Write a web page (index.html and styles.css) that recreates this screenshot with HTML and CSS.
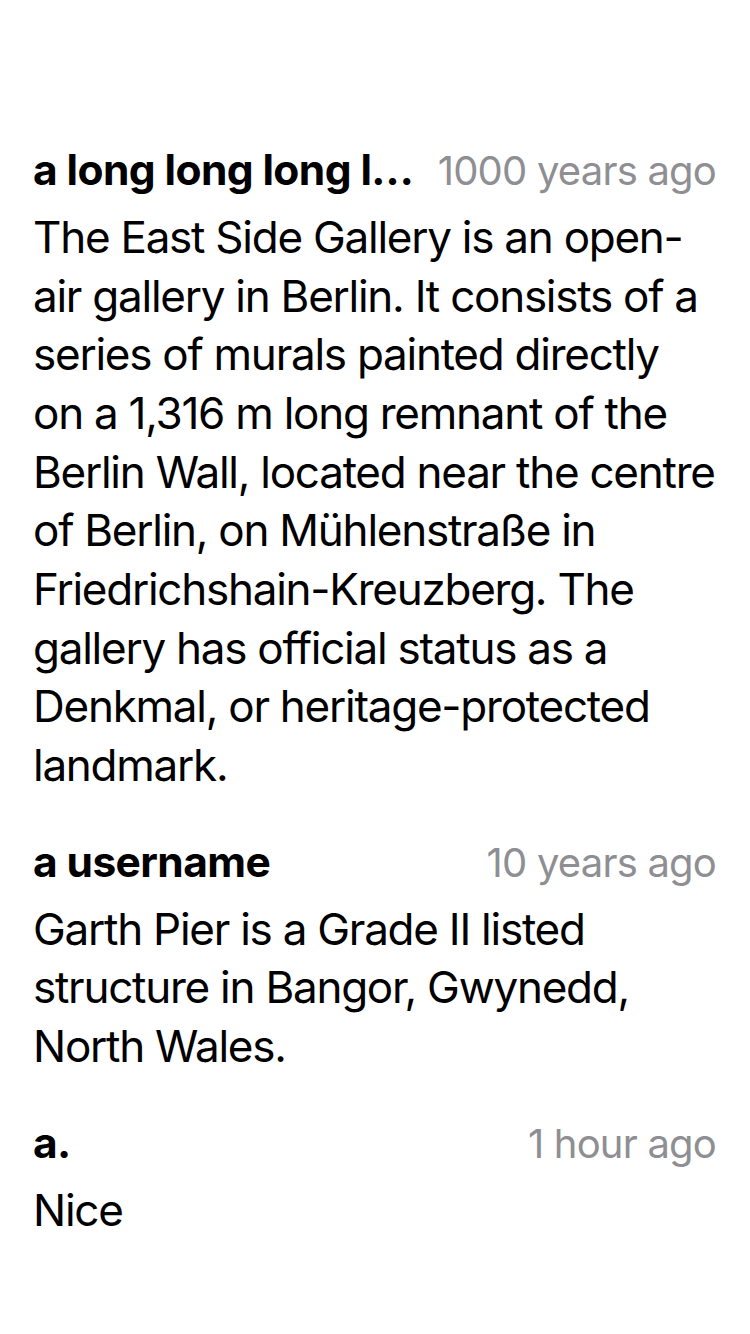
FILE: index.html
```html
<!DOCTYPE html>
<html lang="en">
<head>
<meta charset="utf-8">
<title>Comments</title>
<link rel="stylesheet" href="styles.css">
</head>
<body>
<main class="comments">
  <article class="comment">
    <header class="comment-head">
      <span class="comment-name">a long long long long long username</span>
      <span class="comment-time">1000 years ago</span>
    </header>
    <p class="comment-body">The East Side Gallery is an open-air gallery in Berlin. It consists of a series of murals painted directly on a 1,316&nbsp;m long remnant of the Berlin Wall, located near the centre of Berlin, on Mühlenstraße in Friedrichshain-Kreuzberg. The gallery has official status as a Denkmal, or heritage-protected landmark.</p>
  </article>
  <article class="comment">
    <header class="comment-head">
      <span class="comment-name">a username</span>
      <span class="comment-time">10 years ago</span>
    </header>
    <p class="comment-body">Garth Pier is a Grade II listed structure in Bangor, Gwynedd, North Wales.</p>
  </article>
  <article class="comment">
    <header class="comment-head">
      <span class="comment-name">a.</span>
      <span class="comment-time">1 hour ago</span>
    </header>
    <p class="comment-body">Nice</p>
  </article>
</main>
</body>
</html>
```

FILE: styles.css
```css
html, body {
  margin: 0;
  padding: 0;
  background: #ffffff;
}

body {
  font-family: Inter, "Liberation Sans", sans-serif;
  color: #000000;
  -webkit-font-smoothing: antialiased;
}

.comments {
  padding: 144px 34px 0 33px;
  display: flex;
  flex-direction: column;
  gap: 41px;
}

.comment {
  display: flex;
  flex-direction: column;
  gap: 12px;
}

.comment-head {
  display: flex;
  align-items: baseline;
  justify-content: space-between;
  gap: 20px;
  line-height: 48px;
}

.comment-name {
  font-size: 42.5px;
  line-height: 52px;
  font-weight: 700;
  letter-spacing: -0.6px;
  white-space: nowrap;
  overflow: hidden;
  text-overflow: ellipsis;
  min-width: 0;
}

.comment-time {
  font-size: 40px;
  font-weight: 400;
  color: #8e8e93;
  letter-spacing: -0.8px;
  white-space: nowrap;
  flex-shrink: 0;
}

.comment-body {
  margin: 0;
  font-size: 44px;
  line-height: 58.67px;
  letter-spacing: -1.25px;
}
```
